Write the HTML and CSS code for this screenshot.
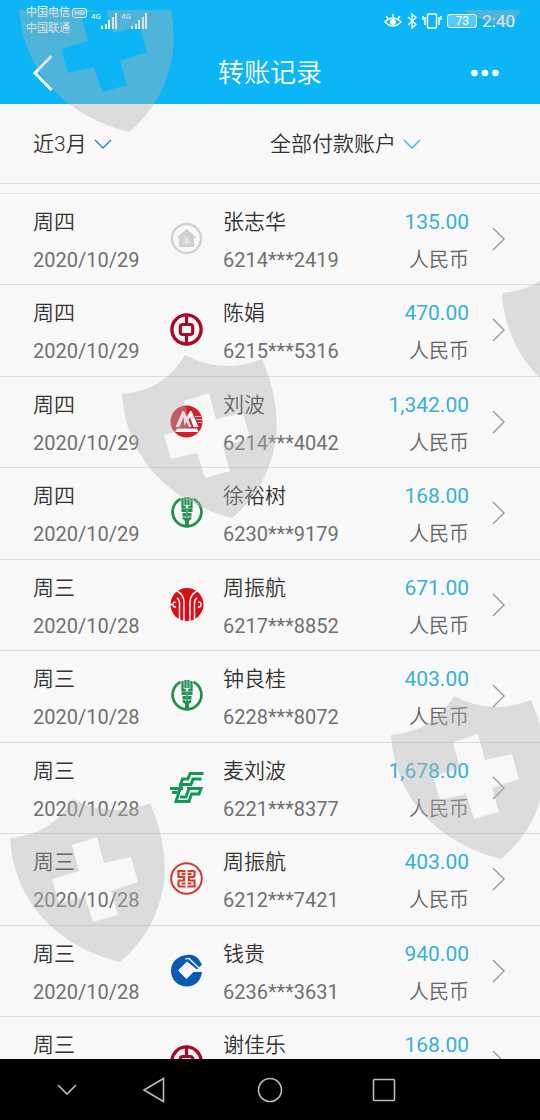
FILE: index.html
```html
<!DOCTYPE html>
<html lang="zh-CN">
<head>
<meta charset="utf-8">
<meta name="viewport" content="width=device-width, initial-scale=1">
<title>转账记录</title>
<link rel="stylesheet" href="styles.css">
</head>
<body>
<svg class="defs" aria-hidden="true">
  <symbol id="go" viewBox="0 0 13 24"><path d="M1 1L12 12L1 23" fill="none" stroke="#999" stroke-width="1.4"/></symbol>
  <symbol id="down" viewBox="0 0 18 10"><path d="M1 1L9 9L17 1" fill="none" stroke="currentColor" stroke-width="1.3"/></symbol>
  <symbol id="bars" viewBox="0 0 17 16"><path d="M0 13h2v3H0zM4 11h2v5H4zM7 7h2v9H7zM11 4h2v12h-2zM14 0h2v16h-2z" fill="currentColor"/></symbol>
  <symbol id="house" viewBox="0 0 34 34"><circle cx="16.5" cy="16.500" r="14.5" fill="none" stroke="#d2d2d2" stroke-width="2.4"/><path d="M16.500 7L26.500 15.500H24V25H9V15.500H6.500Z" fill="#cfcfcf"/><path d="M14 14l2.500 3 2.500-3M13 18h7M13 20.500h7M16.500 17v6" fill="none" stroke="#f0f0f0" stroke-width=".9"/></symbol>
  <symbol id="boc" viewBox="0 0 34 34"><g fill="none" stroke="#a90a2c"><circle cx="16.500" cy="16.500" r="14.600" stroke-width="3.400"/><rect x="10.300" y="11.500" width="12.400" height="10" rx="2.500" stroke-width="3.200"/><path d="M16.500 2v9.500M16.500 21.500V31" stroke-width="3.200"/></g></symbol>
  <symbol id="cmb" viewBox="0 0 34 34"><circle cx="16.500" cy="16.500" r="16" fill="#d02029"/><path d="M5.500 22L12.500 6H14L17 12L20 6H21.500L28.500 22H23.500L20 12L18.500 15L21.500 22H19L16.500 17L14.500 21L13.500 12L9.500 22Z" fill="#fff"/><path d="M7 23.500H27L28.500 27H5Z" fill="#fff"/><path d="M25 11.500h6M26.500 14.500h6M28 17.500h4.500" stroke="#f3c5c5" stroke-width=".9"/></symbol>
  <symbol id="abc" viewBox="0 0 34 34"><g fill="none" stroke="#22904f"><path d="M10.500 3A14.400 14.400 0 1 0 23.500 3" stroke-width="2.700"/><path d="M12.500 2V11H15.800M21.500 2V11H18.200M15.500 1V9M18.500 1V9" stroke-width="2.300"/><path d="M11.500 14.300H16M18 14.300H22.500M12.500 18.700H16.300M17.700 18.700H21.500" stroke-width="3.400"/><path d="M13 21.500L17 25L21 21.500" stroke-width="2.500"/><path d="M17 12V31" stroke-width="1.500"/><path d="M17 22V31.500" stroke-width="4"/></g></symbol>
  <symbol id="citic" viewBox="0 0 34 34"><circle cx="17" cy="16.500" r="16.500" fill="#de0b14"/><g fill="none" stroke="#f8f8f8" stroke-width="1.500"><path d="M7 3Q14 7 14 14V34M27 3Q20 7 20 14V34M9.500 31V15Q9.500 11.500 7 10M24.500 31V15Q24.500 11.500 27 10M6 14.500Q3 13 3 16.500Q3 20 6 18.500M0 16.500H3M28 14.500Q31 13 31 16.500Q31 20 28 18.500"/></g></symbol>
  <symbol id="psbc" viewBox="0 0 34 34"><g fill="none" stroke="#149654" stroke-width="3"><path d="M33.500 2.500H20L18 8H12.500L10.500 13.500H21L23 8H31.500"/><path d="M0 17.500H13M17 17.500H31L29 23H21.500L19 30.500H6L11.500 13.500M2 21.500H10M10 26H16L19 17.500"/></g></symbol>
  <symbol id="icbc" viewBox="0 0 34 34"><g fill="none" stroke="#d33a2c"><circle cx="16.500" cy="16.500" r="15.300" stroke-width="2"/><path d="M15.500 9H8.500V14.800H14V18.500H8.500M15.500 24.500H8.500M17.500 9H24.500M24.500 14.800H19V18.500H24.500V24.500H17.500M24.500 9V14.800M8.500 18.500V24.500M11.500 11.900H15.500M17.500 11.900H21.500M11.500 21.500H15.500M17.500 21.500H21.500" stroke-width="2.200"/></g></symbol>
  <symbol id="ccb" viewBox="0 0 34 34"><path d="M17 1C22 0 26 2 28.500 5L32 10.500L27 15.500L17 7.500L8 16.500L16.500 25L23.500 18H32C31 27 25 32.500 17 32.500C8 32.500 1 26 1 16.500C1 8 8 1.500 17 1Z" fill="#085bb5"/><path d="M16.500 8.500L24.500 16.500L16.500 24.500L8.500 16.500Z" fill="#f8f8f8"/><path d="M15 5L19 4.500L29 14" fill="none" stroke="#f8f8f8" stroke-width="1.200"/></symbol>
  <symbol id="shield" viewBox="0 0 156 164"><path fill-rule="evenodd" fill="#b3b3b3" d="M0 39Q42 36 63 0Q101 20 140 4Q158 45 154 83Q147 132 110 163C50 148 4 105 0 39ZM62 46L87 38L94 64L121 58L128 83L101 92L108 116L83 123L75 98L49 104L42 80L69 72Z"/></symbol>
</svg>

<div class="screen">
  <header class="top">
    <div class="status">
      <div class="carriers"><div class="carrier">中国电信<span class="hd">HD</span></div><div class="carrier">中国联通</div></div>
      <div class="signal"><span>4G</span><svg><use href="#bars"/></svg></div>
      <div class="signal"><span>4G</span><svg><use href="#bars"/></svg></div>
      <div class="indicators">
        <svg width="18" height="16" viewBox="0 0 18 16" fill="none" stroke="#fff" stroke-width="1.500"><path d="M1 9Q9 1 17 9Q9 17 1 9ZM2 3l2 2.500M9 1v3M16 3l-2 2.500"/><circle cx="9" cy="9" r="2.200" fill="#fff"/></svg>
        <svg width="10" height="16" viewBox="0 0 10 16" fill="none" stroke="#fff" stroke-width="1.300"><path d="M1 4l8 7.500L5 15V1l4 3.500L1 12"/></svg>
        <svg width="20" height="16" viewBox="0 0 20 16" fill="none" stroke="#fff" stroke-width="1.500"><rect x="5.500" y="1" width="9" height="14" rx="1"/><path d="M3 4v8M1 3v4M17 4v8M19 3v4"/></svg>
        <span class="battery">73</span>
        <time>2:40</time>
      </div>
    </div>
    <div class="titlebar">
      <button class="back" aria-label="返回"><svg width="20" height="36" viewBox="0 0 20 36"><path d="M18.500 1L2 18L18.500 35" fill="none" stroke="#fff" stroke-width="3"/></svg></button>
      <h1>转账记录</h1>
      <button class="more" aria-label="更多"><svg width="28" height="8" viewBox="0 0 28 8" fill="#fff"><circle cx="3.500" cy="4" r="3.300"/><circle cx="14" cy="4" r="3.300"/><circle cx="24.500" cy="4" r="3.300"/></svg></button>
    </div>
  </header>

  <div class="filters">
    <label class="filter period"><select aria-label="时间范围"><option>近3月</option></select><svg><use href="#down"/></svg></label>
    <label class="filter account"><select aria-label="付款账户"><option>全部付款账户</option></select><svg><use href="#down"/></svg></label>
  </div>

  <main class="records">
    <ul>
      <li><a href="#"><span class="cell"><b>周四</b><small>2020/10/29</small></span><svg class="logo"><use href="#house"/></svg><span class="cell payee"><b>张志华</b><small>6214***2419</small></span><span class="cell sum"><b>135.00</b><small>人民币</small></span><svg class="go"><use href="#go"/></svg></a></li>
      <li><a href="#"><span class="cell"><b>周四</b><small>2020/10/29</small></span><svg class="logo"><use href="#boc"/></svg><span class="cell payee"><b>陈娟</b><small>6215***5316</small></span><span class="cell sum"><b>470.00</b><small>人民币</small></span><svg class="go"><use href="#go"/></svg></a></li>
      <li><a href="#"><span class="cell"><b>周四</b><small>2020/10/29</small></span><svg class="logo"><use href="#cmb"/></svg><span class="cell payee"><b>刘波</b><small>6214***4042</small></span><span class="cell sum"><b>1,342.00</b><small>人民币</small></span><svg class="go"><use href="#go"/></svg></a></li>
      <li><a href="#"><span class="cell"><b>周四</b><small>2020/10/29</small></span><svg class="logo"><use href="#abc"/></svg><span class="cell payee"><b>徐裕树</b><small>6230***9179</small></span><span class="cell sum"><b>168.00</b><small>人民币</small></span><svg class="go"><use href="#go"/></svg></a></li>
      <li><a href="#"><span class="cell"><b>周三</b><small>2020/10/28</small></span><svg class="logo"><use href="#citic"/></svg><span class="cell payee"><b>周振航</b><small>6217***8852</small></span><span class="cell sum"><b>671.00</b><small>人民币</small></span><svg class="go"><use href="#go"/></svg></a></li>
      <li><a href="#"><span class="cell"><b>周三</b><small>2020/10/28</small></span><svg class="logo"><use href="#abc"/></svg><span class="cell payee"><b>钟良桂</b><small>6228***8072</small></span><span class="cell sum"><b>403.00</b><small>人民币</small></span><svg class="go"><use href="#go"/></svg></a></li>
      <li><a href="#"><span class="cell"><b>周三</b><small>2020/10/28</small></span><svg class="logo"><use href="#psbc"/></svg><span class="cell payee"><b>麦刘波</b><small>6221***8377</small></span><span class="cell sum"><b>1,678.00</b><small>人民币</small></span><svg class="go"><use href="#go"/></svg></a></li>
      <li><a href="#"><span class="cell"><b>周三</b><small>2020/10/28</small></span><svg class="logo"><use href="#icbc"/></svg><span class="cell payee"><b>周振航</b><small>6212***7421</small></span><span class="cell sum"><b>403.00</b><small>人民币</small></span><svg class="go"><use href="#go"/></svg></a></li>
      <li><a href="#"><span class="cell"><b>周三</b><small>2020/10/28</small></span><svg class="logo"><use href="#ccb"/></svg><span class="cell payee"><b>钱贵</b><small>6236***3631</small></span><span class="cell sum"><b>940.00</b><small>人民币</small></span><svg class="go"><use href="#go"/></svg></a></li>
      <li><a href="#"><span class="cell"><b>周三</b></span><svg class="logo"><use href="#boc"/></svg><span class="cell payee"><b>谢佳乐</b></span><span class="cell sum"><b>168.00</b></span><svg class="go"><use href="#go"/></svg></a></li>
    </ul>
  </main>

  <nav class="softkeys">
    <button aria-label="收起"><svg width="22" height="14" viewBox="0 0 22 14"><path d="M2 2L11 11L20 2"/></svg></button>
    <button aria-label="返回"><svg width="24" height="28" viewBox="0 0 24 28"><path d="M21.500 2.500V25.500L2 14Z"/></svg></button>
    <button aria-label="主屏幕"><svg width="28" height="28" viewBox="0 0 28 28"><circle cx="14" cy="14" r="11.500"/></svg></button>
    <button aria-label="最近任务"><svg width="26" height="26" viewBox="0 0 26 26"><rect x="2.500" y="2.500" width="21" height="21" rx="1"/></svg></button>
  </nav>

  <div class="watermarks" aria-hidden="true">
    <svg class="mark m1"><use href="#shield"/></svg>
    <svg class="mark m2"><use href="#shield"/></svg>
    <svg class="mark m3"><use href="#shield"/></svg>
    <svg class="mark m4"><use href="#shield"/></svg>
    <svg class="mark m5"><use href="#shield"/></svg>
    <svg class="mark m6"><use href="#shield"/></svg>
  </div>
</div>
</body>
</html>
```
FILE: styles.css
```css
* { box-sizing: border-box; }
body {
  margin: 0;
  background: #f8f8f8;
  color: #333;
  font-family: Roboto, "Noto Sans CJK SC", sans-serif;
}
button, select {
  border: 0;
  padding: 0;
  background: none;
  color: inherit;
  font: inherit;
  appearance: none;
}
svg { display: block; flex: none; }
.defs { position: absolute; width: 0; height: 0; }
.screen {
  position: relative;
  display: flex;
  flex-direction: column;
  height: 100vh;
  overflow: hidden;
}

.top { background: #0cb5f5; color: #fff; flex: none; }
.status { display: flex; align-items: center; height: 42px; padding: 0 25px 0 26px; }
.carriers { width: 65px; font-size: 11px; line-height: 16px; }
.carrier { display: flex; align-items: center; gap: 2px; white-space: nowrap; }
.hd {
  border-radius: 3px;
  border: 1px solid #fff;
  padding: 0 1px;
  font-size: 8px;
  font-weight: 700;
  line-height: 8px;
}
.signal { display: flex; width: 30px; }
.signal span { width: 10px; font-size: 8px; line-height: 8px; }
.signal svg { width: 17px; height: 16px; }
.indicators { display: flex; align-items: center; gap: 5px; margin-left: auto; }
.battery {
  width: 30px;
  border: 1px solid #fff;
  border-radius: 3px;
  background: rgba(255, 255, 255, .3);
  font-size: 12px;
  line-height: 12px;
  text-align: center;
}
time { font-size: 17px; line-height: 20px; }

.titlebar {
  display: grid;
  grid-template-columns: 1fr auto 1fr;
  align-items: center;
  height: 62px;
  padding: 0 33px;
}
.back { justify-self: start; }
.more { justify-self: end; padding-right: 8px; }
h1 { margin: 0; font-size: 26px; line-height: 36px; font-weight: 350; }

.filters {
  display: grid;
  grid-template-columns: 1fr 1fr;
  flex: none;
  height: 80px;
  border-bottom: 1px solid #ddd;
}
.filter { display: flex; align-items: center; gap: 7px; font-size: 21px; font-weight: 350; }
.filter select { line-height: 30px; }
.filter svg { width: 18px; height: 10px; }
.period { padding-left: 33px; color: #333; }
.period svg { color: #2b87aa; }
.account svg { color: #35b5e5; }

.records { flex: 1; min-height: 0; overflow: hidden; margin-top: 9px; border-top: 1px solid #e2e2e2; }
ul { margin: 0; padding: 0; list-style: none; }
li { height: 91px; border-bottom: 1px solid #ddd; }
li:nth-child(even) { height: 92px; }
a {
  display: grid;
  grid-template-columns: 137px 34px 1fr auto 13px;
  align-items: center;
  height: 90px;
  padding: 0 35px 0 33px;
  color: inherit;
  text-decoration: none;
}
.cell { display: grid; align-self: start; gap: 8px; padding-top: 13px; }
.cell b { font-size: 21px; line-height: 30px; font-weight: 350; }
.cell small { font-size: 20px; line-height: 30px; font-weight: 400; color: #707070; }
.payee { padding-left: 19px; }
.sum { text-align: right; padding-right: 23px; }
.sum b { color: #36b0d6; font-weight: 400; }
.sum small { color: #666; font-weight: 350; }
.logo { width: 34px; height: 34px; }
.go { width: 13px; height: 24px; }

.softkeys {
  display: grid;
  grid-template-columns: 134fr 40fr 192fr 36fr 138fr;
  flex: none;
  height: 61px;
  background: #000;
}
.softkeys button { display: grid; place-items: center; }
.softkeys svg { fill: none; stroke: #bbb; stroke-width: 1.6; }

.watermarks { position: absolute; inset: 10px 0 0; overflow: hidden; pointer-events: none; opacity: .4; }
.mark { position: absolute; width: 156px; height: 164px; }
.m1 { left: 19px; top: -41px; }
.m2 { left: 395px; top: -146px; }
.m3 { left: 502px; top: 244px; }
.m4 { left: 122px; top: 345px; }
.m5 { left: 391px; top: 686px; }
.m6 { left: 10px; top: 789px; }
```
